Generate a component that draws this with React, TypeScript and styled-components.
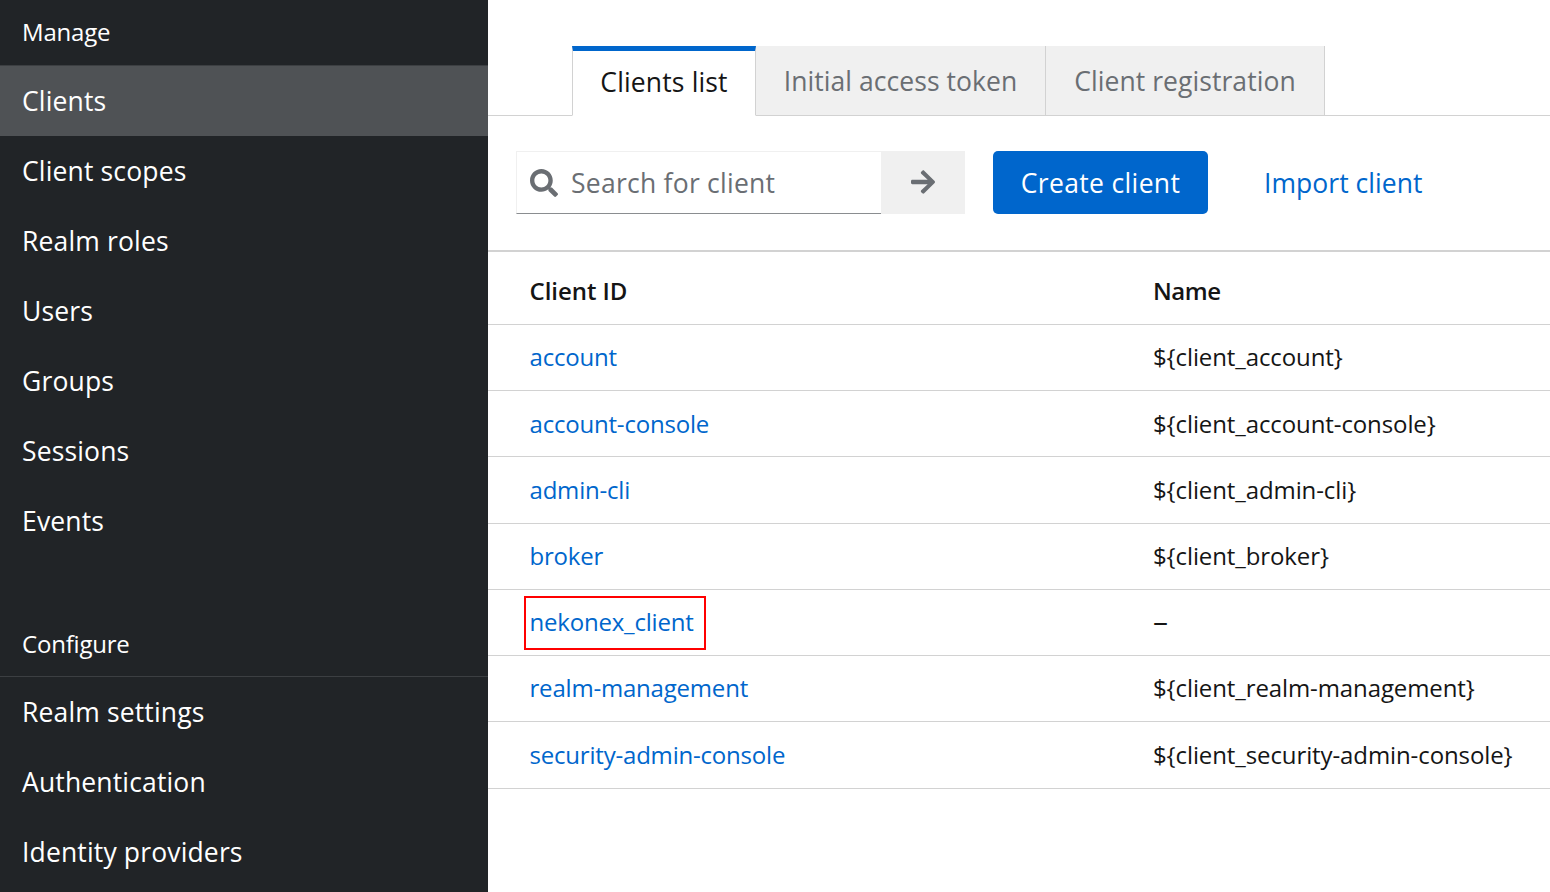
import React from "react";
import styled, { createGlobalStyle } from "styled-components";

const Global = createGlobalStyle`
  html, body { margin: 0; padding: 0; height: 100%; overflow: hidden; background: #fff; }
  body { font-family: "Open Sans", "Noto Sans", sans-serif; }
  #root { height: 100%; }
`;

const Page = styled.div`
  display: flex;
  width: 1550px;
  height: 892px;
  overflow: hidden;
`;

const Sidebar = styled.nav`
  width: 488px;
  flex: none;
  background: #212427;
  color: #fff;
  display: flex;
  flex-direction: column;
`;

const SectionTitle = styled.div<{ $height: number; $pad: number }>`
  height: ${(p) => p.$height}px;
  padding-top: ${(p) => p.$pad}px;
  box-sizing: border-box;
  padding-left: 22px;
  font-size: 24px;
  letter-spacing: -0.2px;
  line-height: 34px;
  border-bottom: 1px solid #3c3f42;
`;

const NavItem = styled.div<{ $active?: boolean }>`
  height: 70px;
  flex: none;
  display: flex;
  align-items: center;
  padding-left: 22px;
  box-sizing: border-box;
  font-size: 26.5px;
  letter-spacing: 0.15px;
  background: ${(p) => (p.$active ? "#4f5255" : "transparent")};
`;

const NavGap = styled.div`
  height: 54px;
  flex: none;
`;

const Main = styled.main`
  flex: 1;
  min-width: 0;
  display: flex;
  flex-direction: column;
`;

const TabBar = styled.div`
  margin-top: 46px;
  height: 70px;
  box-sizing: border-box;
  padding-left: 84px;
  display: flex;
  border-bottom: 1px solid #d2d2d2;
`;

const Tab = styled.div<{ $active?: boolean; $width: number }>`
  width: ${(p) => p.$width}px;
  height: 70px;
  box-sizing: border-box;
  display: flex;
  align-items: center;
  justify-content: center;
  font-size: 26.5px;
  letter-spacing: ${(p) => (p.$active ? "0.14px" : "0.06px")};
  color: ${(p) => (p.$active ? "#151515" : "#6a6e73")};
  background: ${(p) => (p.$active ? "#fff" : "#f0f0f0")};
  border-top: ${(p) => (p.$active ? "5px solid #06c" : "none")};
  border-left: ${(p) => (p.$active ? "1px solid #d2d2d2" : "none")};
  border-right: 1px solid #d2d2d2;
  border-bottom: 1px solid ${(p) => (p.$active ? "#fff" : "#d2d2d2")};
  padding-bottom: ${(p) => (p.$active ? "3px" : "0")};
  padding-top: ${(p) => (p.$active ? "0" : "1px")};
`;

const Toolbar = styled.div`
  height: 136px;
  flex: none;
  box-sizing: border-box;
  padding: 35px 0 0 28px;
  display: flex;
  align-items: flex-start;
  border-bottom: 2px solid #d2d2d2;
`;

const SearchBox = styled.div`
  width: 365px;
  height: 63px;
  box-sizing: border-box;
  display: flex;
  align-items: center;
  gap: 13px;
  padding-left: 13px;
  border: 1px solid #f0f0f0;
  border-right: none;
  border-bottom: 1px solid #8a8d90;
  font-size: 26.5px;
  letter-spacing: 0.25px;
  color: #6a6e73;
`;

const ArrowButton = styled.div`
  width: 84px;
  height: 63px;
  padding-bottom: 2px;
  box-sizing: border-box;
  background: #f0f0f0;
  display: flex;
  align-items: center;
  justify-content: center;
`;

const PrimaryButton = styled.div`
  margin-left: 28px;
  width: 215px;
  height: 63px;
  border-radius: 5px;
  background: #06c;
  color: #fff;
  display: flex;
  align-items: center;
  justify-content: center;
  font-size: 26.5px;
  letter-spacing: 0.35px;
`;

const LinkButton = styled.div`
  margin-left: 56px;
  height: 63px;
  display: flex;
  align-items: center;
  color: #06c;
  font-size: 26.5px;
  letter-spacing: 0.05px;
`;

const Row = styled.div<{ $head?: boolean }>`
  height: ${(p) => (p.$head ? "73px" : "66.24px")};
  flex: none;
  box-sizing: border-box;
  display: grid;
  grid-template-columns: 623.5px 1fr;
  padding: ${(p) => (p.$head ? "4px 0 0 41.5px" : "0 0 1.6px 41.5px")};
  align-items: center;
  border-bottom: 1px solid #d2d2d2;
  font-size: 24px;
  letter-spacing: -0.3px;
  color: #151515;
`;

const HeadCell = styled.div<{ $spacing: number }>`
  font-weight: 600;
  font-size: 24px;
  letter-spacing: ${(p) => p.$spacing}px;
`;

const NameCell = styled.div`
  letter-spacing: -0.1px;
`;

const EmptyDash = styled.span`
  display: block;
  font-size: 30px;
  line-height: 30px;
  margin-bottom: 2px;
  letter-spacing: 0;
`;

const ClientLink = styled.a<{ $marked?: boolean }>`
  color: #06c;
  position: relative;
  justify-self: start;
  letter-spacing: -0.2px;
  ${(p) =>
    p.$marked
      ? `&::after {
          content: "";
          position: absolute;
          left: -5.5px;
          right: -12px;
          top: -9px;
          bottom: -12px;
          border: 2px solid #f00;
        }`
      : ""}
`;

const SearchIcon = () => (
  <svg width="28" height="28" viewBox="0 0 512 512" fill="#6a6e73" aria-hidden>
    <path d="M505 442.7 405.3 343c-4.500-4.500-10.600-7-17-7H372c27.600-35.300 44-79.700 44-128C416 93.100 322.900 0 208 0S0 93.100 0 208s93.100 208 208 208c48.300 0 92.700-16.400 128-44v16.300c0 6.400 2.500 12.500 7 17l99.700 99.700c9.400 9.400 24.600 9.400 33.900 0l28.300-28.300c9.400-9.400 9.400-24.600.1-34zM208 336c-70.700 0-128-57.200-128-128 0-70.700 57.200-128 128-128 70.700 0 128 57.200 128 128 0 70.700-57.200 128-128 128z" />
  </svg>
);

const ArrowIcon = () => (
  <svg width="24" height="28" viewBox="0 0 448 512" fill="#6a6e73" aria-hidden>
    <path d="m190.500 66.900 22.200-22.200c9.400-9.400 24.600-9.400 33.900 0L441 239c9.400 9.400 9.400 24.600 0 33.900L246.600 467.300c-9.400 9.400-24.600 9.400-33.900 0l-22.200-22.200c-9.500-9.500-9.300-25 .4-34.300L311.400 296H24c-13.300 0-24-10.700-24-24v-32c0-13.300 10.700-24 24-24h287.400L190.900 101.200c-9.800-9.300-10-24.800-.4-34.300z" />
  </svg>
);

const manage = ["Client scopes", "Realm roles", "Users", "Groups", "Sessions", "Events"];
const configure = ["Realm settings", "Authentication", "Identity providers"];

const clients: { id: string; name: string; marked?: boolean }[] = [
  { id: "account", name: "${client_account}" },
  { id: "account-console", name: "${client_account-console}" },
  { id: "admin-cli", name: "${client_admin-cli}" },
  { id: "broker", name: "${client_broker}" },
  { id: "nekonex_client", name: "", marked: true },
  { id: "realm-management", name: "${client_realm-management}" },
  { id: "security-admin-console", name: "${client_security-admin-console}" },
];

export default function App() {
  return (
    <Page>
      <Global />
      <Sidebar>
        <SectionTitle $height={66} $pad={15}>Manage</SectionTitle>
        <NavItem $active>Clients</NavItem>
        {manage.map((m) => (
          <NavItem key={m}>{m}</NavItem>
        ))}
        <NavGap />
        <SectionTitle $height={67} $pad={17}>Configure</SectionTitle>
        {configure.map((m) => (
          <NavItem key={m}>{m}</NavItem>
        ))}
      </Sidebar>
      <Main>
        <TabBar>
          <Tab $active $width={184}>Clients list</Tab>
          <Tab $width={290}>Initial access token</Tab>
          <Tab $width={279}>Client registration</Tab>
        </TabBar>
        <Toolbar>
          <SearchBox>
            <SearchIcon />
            Search for client
          </SearchBox>
          <ArrowButton>
            <ArrowIcon />
          </ArrowButton>
          <PrimaryButton>Create client</PrimaryButton>
          <LinkButton>Import client</LinkButton>
        </Toolbar>
        <Row $head>
          <HeadCell $spacing={-0.05}>Client ID</HeadCell>
          <HeadCell $spacing={-0.45}>Name</HeadCell>
        </Row>
        {clients.map((c) => (
          <Row key={c.id}>
            <ClientLink $marked={c.marked}>{c.id}</ClientLink>
            <NameCell>{c.name || <EmptyDash>–</EmptyDash>}</NameCell>
          </Row>
        ))}
      </Main>
    </Page>
  );
}
